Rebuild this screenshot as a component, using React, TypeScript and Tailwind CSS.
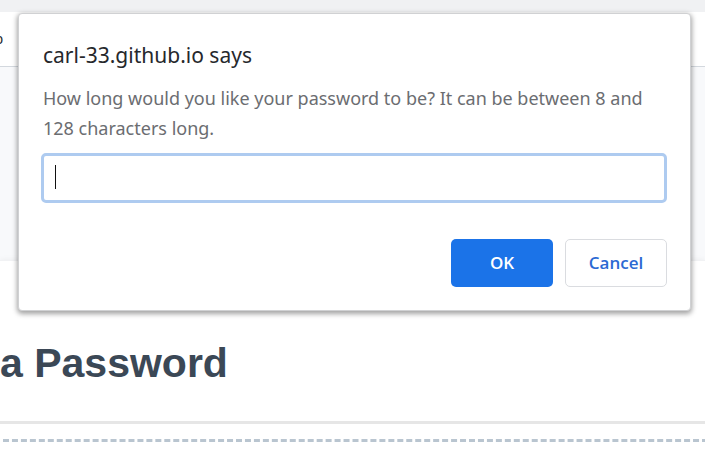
import React from "react";

function PageBackdrop() {
  return (
    <div className="bg-[#f8f9fb]">
      <div className="h-3 bg-[#f0f1f3]" />
      <nav className="flex h-[55px] items-center border-b border-[#d3d8de] bg-white">
        <a
          href="#demo"
          className="flex w-[3px] justify-end font-['Liberation_Sans',Arial,sans-serif] text-sm text-[#24292e]"
        >
          o
        </a>
      </nav>
      <main className="mt-[193px] border-t border-[#f1f2f4] bg-white pb-7 shadow-[0_0_6px_rgba(0,0,0,0.06)]">
        <h1 className="pt-[78px] font-['Liberation_Sans',Arial,sans-serif] text-[41px] leading-[48px] font-bold whitespace-nowrap text-[#3b4856]">
          a Password
        </h1>
        <hr className="mt-[34px] border-t-[3px] border-[#e6e6e6]" />
        <div className="mt-[15px] -mr-[3px] ml-[3px] border-t-[3px] border-dashed border-[#b9c5d0]" />
      </main>
    </div>
  );
}

function PasswordPrompt() {
  return (
    <form
      role="dialog"
      aria-labelledby="prompt-title"
      onSubmit={(event) => event.preventDefault()}
      className="absolute top-[13px] right-[14px] left-[18px] rounded-[4px] border border-[#d0d1d3] bg-white pt-[25px] pr-[23px] pb-[23px] pl-[22px] shadow-[0_2px_5px_1px_rgba(0,0,0,0.36)]"
    >
      <h2 id="prompt-title" className="pl-0.5 text-[21px] leading-8 text-[#26282c]">
        carl-33.github.io says
      </h2>
      <label htmlFor="password-length" className="mt-[12px] block pl-0.5 text-[18px] leading-[30px] text-[#6b6d71]">
        How long would you like your password to be? It can be between 8 and
        <br />
        128 characters long.
      </label>
      <div className="relative mt-[10px]">
        <input
          id="password-length"
          type="text"
          className="block h-[50px] w-full rounded-[5px] border-[3px] border-[#aecbf0] bg-white px-3 text-[18px] caret-transparent outline-none"
        />
        <span className="pointer-events-none absolute top-3 left-[14px] h-6 w-px bg-[#111111]" />
      </div>
      <div className="mt-9 flex justify-end gap-3">
        <button
          type="submit"
          className="h-12 w-[102px] rounded-[5px] bg-[#1b73e8] font-['Open_Sans',sans-serif] text-[17px] font-semibold text-white"
        >
          OK
        </button>
        <button
          type="button"
          className="h-12 w-[102px] rounded-[5px] border border-[#dadce0] bg-white font-['Open_Sans',sans-serif] text-[17px] font-semibold text-[#2b69d3]"
        >
          Cancel
        </button>
      </div>
    </form>
  );
}

export default function App() {
  return (
    <div className="relative min-h-screen overflow-hidden bg-white font-['Noto_Sans','Open_Sans',sans-serif]">
      <PageBackdrop />
      <PasswordPrompt />
    </div>
  );
}
